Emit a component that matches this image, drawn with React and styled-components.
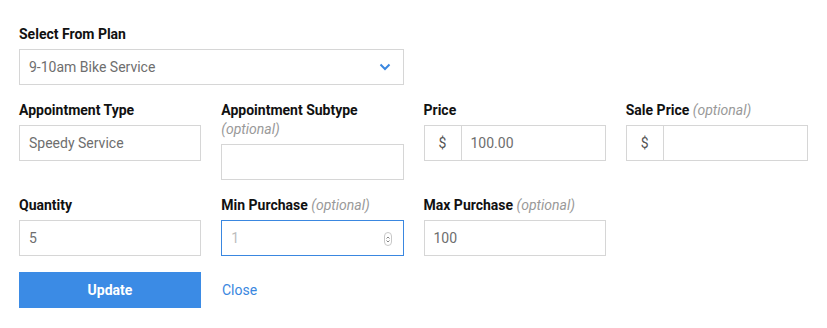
import React from 'react'
import styled, { createGlobalStyle } from 'styled-components'

const GlobalStyle = createGlobalStyle`
  body {
    margin: 0;
    background: #fff;
    font-family: Roboto, 'Liberation Sans', sans-serif;
  }
`

const Form = styled.form`
  width: 789px;
  padding: 25px 19px 0;
  display: grid;
  grid-template-columns: repeat(4, minmax(0, 1fr));
  column-gap: 20px;
  row-gap: 16px;
  align-items: start;
`

const Field = styled.div`
  display: flex;
  flex-direction: column;
  min-width: 0;
  grid-column: span ${(p) => p.span || 1};
`

const Label = styled.label`
  font-size: 14px;
  line-height: 19px;
  font-weight: 700;
  color: #111;
  margin-bottom: 5px;
`

const Optional = styled.span`
  font-weight: 400;
  font-style: italic;
  color: #999;
`

const Box = styled.div`
  position: relative;
  display: flex;
  align-items: center;
  height: 36px;
  box-sizing: border-box;
  border: 1px solid ${(p) => (p.focused ? '#3a87e0' : '#d6d6d6')};
  background: #fff;
`

const Input = styled.input`
  flex: 1;
  width: 100%;
  min-width: 0;
  height: 100%;
  box-sizing: border-box;
  border: none;
  outline: none;
  padding: 0 9px;
  font-family: inherit;
  font-size: 14px;
  color: #6e6e6e;
  background: transparent;
  &::placeholder {
    color: #bdbdbd;
  }
`

const Prefix = styled.span`
  flex: none;
  width: 36px;
  height: 100%;
  display: flex;
  align-items: center;
  justify-content: center;
  border-right: 1px solid #d6d6d6;
  font-size: 14px;
  color: #555;
`

const Chevron = styled.svg`
  position: absolute;
  right: 12px;
  top: 13px;
`

const Spinner = styled.span`
  position: absolute;
  right: 11px;
  top: 11px;
  width: 6px;
  height: 12px;
  border: 1px solid #c8c8c8;
  border-radius: 4px;
  display: flex;
  flex-direction: column;
  align-items: center;
  justify-content: center;
  gap: 1px;
`

const Actions = styled.div`
  grid-column: span 4;
  display: flex;
  align-items: center;
  gap: 21px;
`

const Button = styled.button`
  width: 182px;
  height: 36px;
  border: none;
  background: #3b8be5;
  color: #fff;
  font-family: inherit;
  font-size: 14px;
  font-weight: 700;
  cursor: pointer;
`

const Link = styled.a`
  font-size: 14px;
  color: #3a87e0;
  text-decoration: none;
  cursor: pointer;
`

const TinyArrow = ({ up }) => (
  <svg width='4' height='3' viewBox='0 0 4 3'>
    <path d={up ? 'M0.5 2.5 L2 1 L3.5 2.5' : 'M0.5 0.5 L2 2 L3.5 0.5'} fill='none' stroke='#666' strokeWidth='0.8' />
  </svg>
)

const App = () => {
  return (
    <>
      <GlobalStyle />
      <Form onSubmit={(e) => e.preventDefault()}>
        <Field span={2}>
          <Label>Select From Plan</Label>
          <Box>
            <Input defaultValue='9-10am Bike Service' readOnly />
            <Chevron width='12' height='8' viewBox='0 0 12 8'>
              <path d='M1.5 1.5 L6 6 L10.5 1.5' fill='none' stroke='#3a87e0' strokeWidth='2' />
            </Chevron>
          </Box>
        </Field>
        <Field span={2} />

        <Field>
          <Label>Appointment Type</Label>
          <Box>
            <Input defaultValue='Speedy Service' />
          </Box>
        </Field>
        <Field>
          <Label>
            Appointment Subtype <Optional>(optional)</Optional>
          </Label>
          <Box>
            <Input />
          </Box>
        </Field>
        <Field>
          <Label>Price</Label>
          <Box>
            <Prefix>$</Prefix>
            <Input defaultValue='100.00' />
          </Box>
        </Field>
        <Field>
          <Label>
            Sale Price <Optional>(optional)</Optional>
          </Label>
          <Box>
            <Prefix>$</Prefix>
            <Input />
          </Box>
        </Field>

        <Field>
          <Label>Quantity</Label>
          <Box>
            <Input defaultValue='5' />
          </Box>
        </Field>
        <Field>
          <Label>
            Min Purchase <Optional>(optional)</Optional>
          </Label>
          <Box focused>
            <Input placeholder='1' />
            <Spinner>
              <TinyArrow up />
              <TinyArrow />
            </Spinner>
          </Box>
        </Field>
        <Field>
          <Label>
            Max Purchase <Optional>(optional)</Optional>
          </Label>
          <Box>
            <Input defaultValue='100' />
          </Box>
        </Field>
        <Field />

        <Actions>
          <Button type='submit'>Update</Button>
          <Link>Close</Link>
        </Actions>
      </Form>
    </>
  )
}

export default App
